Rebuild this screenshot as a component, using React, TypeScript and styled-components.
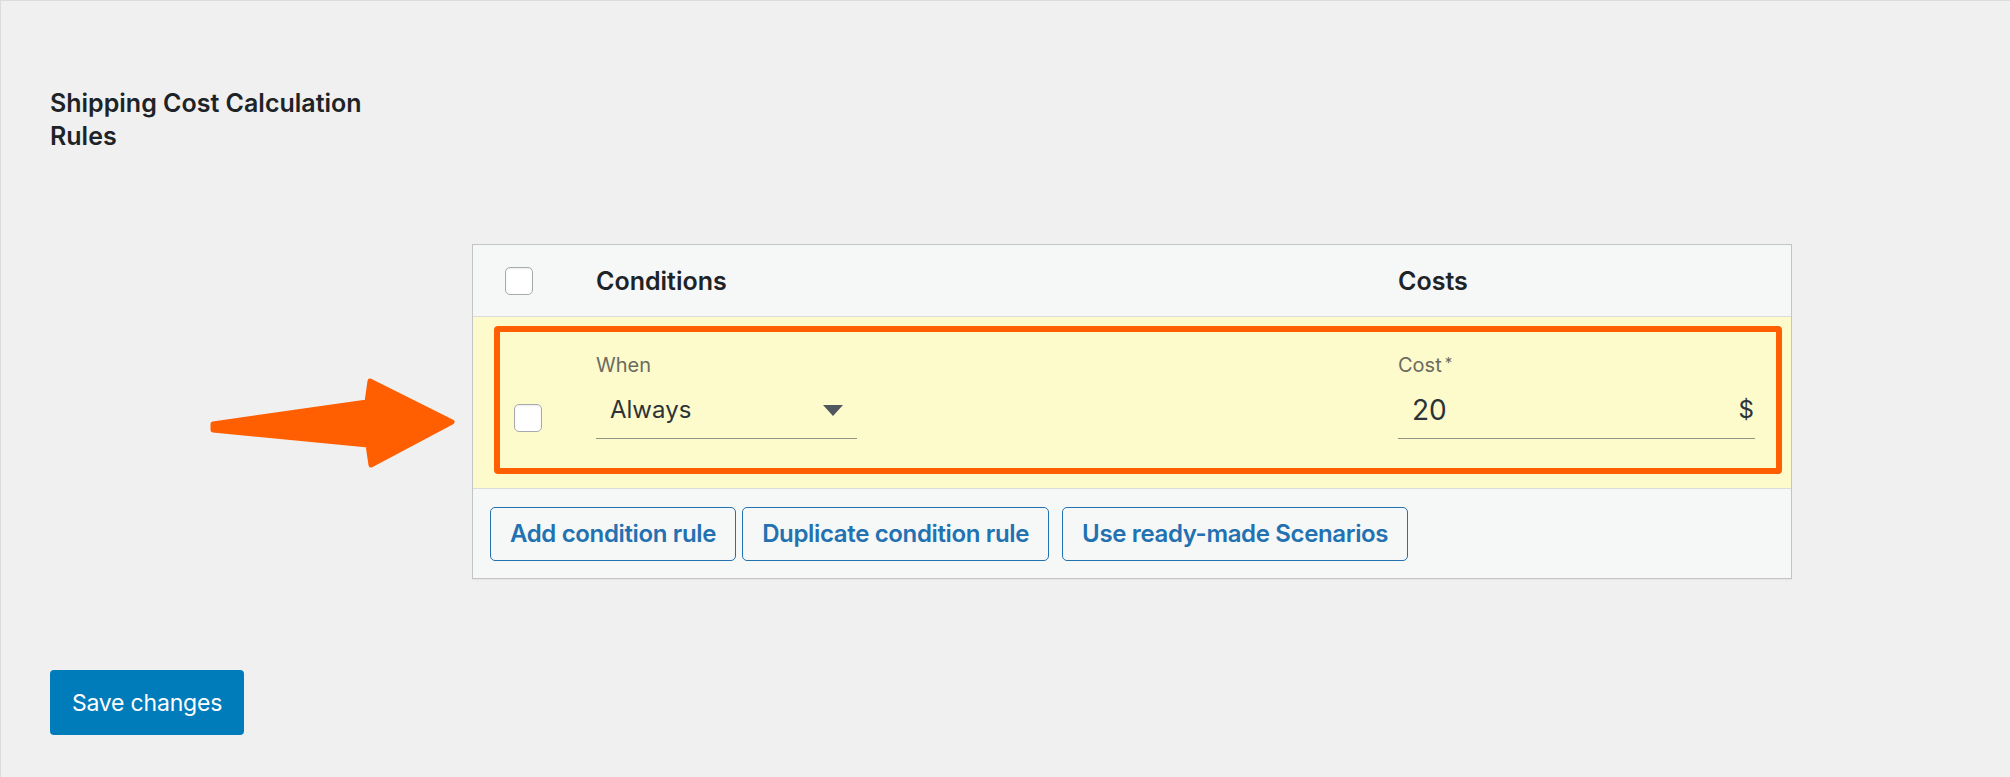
import React from "react";
import styled, { createGlobalStyle } from "styled-components";

const GlobalStyle = createGlobalStyle`
  html, body {
    margin: 0;
    padding: 0;
    background: #f0f0f1;
  }
  body {
    font-family: Inter, "Noto Sans", sans-serif;
    color: #1d2327;
  }
`;

const Page = styled.div`
  position: relative;
  box-sizing: border-box;
  height: 777px;
  border-top: 1px solid #dcdcde;
  border-left: 1px solid #dcdcde;
  padding: 86px 0 0 49px;
`;

const FormRow = styled.div`
  display: grid;
  grid-template-columns: 422px 1320px;
`;

const Heading = styled.h2`
  margin: 0;
  max-width: 360px;
  font-size: 25px;
  line-height: 33px;
  font-weight: 600;
  color: #1d2327;
`;

const Cell = styled.div`
  padding-top: 157px;
`;

const Table = styled.div`
  box-sizing: border-box;
  width: 1320px;
  border: 1px solid #c3c4c7;
  box-shadow: 0 1px 1px rgba(0, 0, 0, 0.04);
`;

const Row = styled.div<{ $bg: string; $height: number; $align: string }>`
  position: relative;
  display: grid;
  grid-template-columns: 123px 802px 1fr;
  align-items: ${(p) => p.$align};
  height: ${(p) => p.$height}px;
  background: ${(p) => p.$bg};
  border-bottom: 1px solid #dcdcde;
`;

const CheckCell = styled.div<{ $left: number; $top?: number }>`
  padding-left: ${(p) => p.$left}px;
  padding-top: ${(p) => p.$top ?? 0}px;
`;

const Checkbox = styled.span`
  display: block;
  box-sizing: border-box;
  width: 28px;
  height: 28px;
  background: #ffffff;
  border: 1px solid #a7aaad;
  border-radius: 5px;
  box-shadow: inset 0 1px 2px rgba(0, 0, 0, 0.08);
`;

const ColTitle = styled.div`
  font-size: 25px;
  line-height: 32px;
  font-weight: 600;
  color: #1d2327;
`;

const Field = styled.div<{ $width: number }>`
  width: ${(p) => p.$width}px;
  padding-top: 36px;
`;

const Label = styled.div`
  font-size: 20px;
  line-height: 24px;
  color: #6a6b5f;
  margin-bottom: 9px;
`;

const Required = styled.sup`
  font-size: 15px;
  margin-left: 3px;
  vertical-align: 4px;
  line-height: 0;
`;

const Control = styled.div`
  display: flex;
  align-items: center;
  justify-content: space-between;
  padding: 8px 1px 12px 14px;
  border-bottom: 1px solid #929384;
  color: #2c3338;
`;

const ControlText = styled.span<{ $size: number }>`
  font-size: ${(p) => p.$size}px;
  line-height: 32px;
`;

const Caret = styled.span`
  width: 0;
  height: 0;
  margin-right: 13px;
  border-left: 10px solid transparent;
  border-right: 10px solid transparent;
  border-top: 11px solid #50575e;
`;

const Highlight = styled.div`
  position: absolute;
  left: 21px;
  top: 9px;
  width: 1288px;
  height: 148px;
  box-sizing: border-box;
  border: 6px solid #ff5f00;
  border-radius: 4px;
  pointer-events: none;
`;

const Footer = styled.div`
  display: flex;
  align-items: center;
  height: 89px;
  padding-left: 17px;
  background: #f6f7f7;
`;

const Button = styled.button<{ $spaced?: boolean }>`
  box-sizing: border-box;
  height: 54px;
  margin-left: ${(p) => (p.$spaced ? 13 : 6)}px;
  padding: 0 19px;
  background: #f6f7f7;
  border: 1px solid #2271b1;
  border-radius: 5px;
  color: #2271b1;
  font-family: Inter, "Noto Sans", sans-serif;
  font-size: 24px;
  font-weight: 600;
  letter-spacing: -0.35px;
  cursor: pointer;

  &:first-child {
    margin-left: 0;
  }
`;

const SaveButton = styled.button`
  box-sizing: border-box;
  margin-top: 91px;
  width: 194px;
  height: 65px;
  padding: 0;
  background: #007cba;
  border: none;
  border-radius: 4px;
  color: #ffffff;
  font-family: Inter, "Noto Sans", sans-serif;
  font-size: 23px;
  letter-spacing: -0.2px;
  cursor: pointer;
`;

const Arrow = styled.svg`
  position: absolute;
  left: 199px;
  top: 369px;
`;

export default function App() {
  return (
    <>
      <GlobalStyle />
      <Page>
        <FormRow>
          <Heading>Shipping Cost Calculation Rules</Heading>
          <Cell>
            <Table>
              <Row $bg="#f6f7f7" $height={71} $align="center">
                <CheckCell $left={32}>
                  <Checkbox />
                </CheckCell>
                <ColTitle>Conditions</ColTitle>
                <ColTitle>Costs</ColTitle>
              </Row>
              <Row $bg="#fdfacb" $height={171} $align="start">
                <CheckCell $left={41} $top={87}>
                  <Checkbox />
                </CheckCell>
                <Field $width={261}>
                  <Label>When</Label>
                  <Control>
                    <ControlText $size={24}>Always</ControlText>
                    <Caret />
                  </Control>
                </Field>
                <Field $width={357}>
                  <Label>
                    Cost<Required>*</Required>
                  </Label>
                  <Control>
                    <ControlText $size={28}>20</ControlText>
                    <ControlText $size={24}>$</ControlText>
                  </Control>
                </Field>
                <Highlight />
              </Row>
              <Footer>
                <Button>Add condition rule</Button>
                <Button>Duplicate condition rule</Button>
                <Button $spaced>Use ready-made Scenarios</Button>
              </Footer>
            </Table>
          </Cell>
        </FormRow>
        <SaveButton>Save changes</SaveButton>
        <Arrow width="265" height="105" viewBox="0 0 265 105">
          <polygon
            points="13,54 167,32 170,11 252,52 171,95 168,75 13,60"
            fill="#ff5f00"
            stroke="#ff5f00"
            strokeWidth="5"
            strokeLinejoin="round"
          />
        </Arrow>
      </Page>
    </>
  );
}
